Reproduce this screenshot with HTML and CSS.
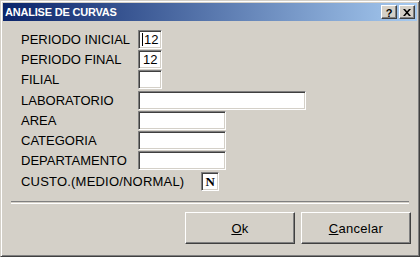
FILE: index.html
```html
<!DOCTYPE html>
<html lang="pt">
<head>
  <meta charset="UTF-8">
  <title>ANALISE DE CURVAS</title>
  <link rel="stylesheet" href="styles.css">
</head>
<body>

  <div class="window">
    <div class="titlebar">
      <span class="title">ANALISE DE CURVAS</span>
      <div class="title-buttons">
        <span class="tbtn help">?</span>
        <span class="tbtn close">
          <svg width="8" height="7" viewBox="0 0 8 7">
            <path d="M0 0h2l2 2.2L6 0h2L5 3.5L8 7H6L4 4.8L2 7H0l3-3.5z" fill="#000"/>
          </svg>
        </span>
      </div>
    </div>

    <form class="form">
      <div class="row">
        <label>PERIODO INICIAL</label>
        <div class="field small"><span class="caret"></span>12</div>
      </div>
      <div class="row">
        <label>PERIODO FINAL</label>
        <div class="field small">12</div>
      </div>
      <div class="row">
        <label>FILIAL</label>
        <div class="field small"></div>
      </div>
      <div class="row spaced">
        <label>LABORATORIO</label>
        <div class="field wide"></div>
      </div>
      <div class="row">
        <label>AREA</label>
        <div class="field medium"></div>
      </div>
      <div class="row">
        <label>CATEGORIA</label>
        <div class="field medium"></div>
      </div>
      <div class="row">
        <label>DEPARTAMENTO</label>
        <div class="field medium"></div>
      </div>
      <div class="row spaced">
        <label class="auto">CUSTO.(MEDIO/NORMAL)</label>
        <div class="field tiny">N</div>
      </div>

      <div class="separator"></div>

      <div class="actions">
        <button type="button"><u>O</u>k</button>
        <button type="button"><u>C</u>ancelar</button>
      </div>
    </form>
  </div>

</body>
</html>
```

FILE: styles.css
```css
body {
  margin: 0;
  background-color: #d4d0c8;
  font-family: "Liberation Sans", Arial, sans-serif;
}

.window {
  width: 420px;
  height: 257px;
  box-sizing: border-box;
  background-color: #d4d0c8;
  border: 1px solid;
  border-color: #d4d0c8 #404040 #404040 #d4d0c8;
  box-shadow: inset 1px 1px #fff, inset -1px -1px #808080;
  padding: 2px;
}

.titlebar {
  height: 18px;
  display: flex;
  align-items: center;
  justify-content: space-between;
  background: linear-gradient(to right, #0a246a, #a6caf0);
  padding: 0 2px 0 2px;
}

.title {
  color: #fff;
  font-weight: bold;
  font-size: 11px;
  letter-spacing: -0.2px;
}

.title-buttons {
  display: flex;
  gap: 2px;
}

.tbtn {
  width: 16px;
  height: 14px;
  box-sizing: border-box;
  display: flex;
  align-items: center;
  justify-content: center;
  background-color: #d4d0c8;
  border: 1px solid;
  border-color: #fff #404040 #404040 #fff;
  box-shadow: inset -1px -1px #808080;
  font-size: 11px;
  font-weight: bold;
  color: #000;
}

.tbtn.help {
  padding-top: 1px;
}

.form {
  padding: 9px 0 0 0;
  margin: 0;
}

.row {
  display: flex;
  align-items: center;
  height: 19px;
  margin-bottom: 1px;
}

.row.spaced {
  margin-top: 2px;
}

.row label {
  width: 117px;
  padding-left: 18px;
  font-size: 13px;
  color: #000;
  flex-shrink: 0;
}

.row label.auto {
  width: auto;
  margin-right: 17px;
  letter-spacing: 0.2px;
}

.field {
  height: 19px;
  box-sizing: border-box;
  background-color: #fff;
  border: 1px solid;
  border-color: #808080 #fff #fff #808080;
  box-shadow: inset 1px 1px #404040, inset -1px -1px #d4d0c8;
  font-size: 13px;
  padding-left: 4px;
  display: flex;
  align-items: center;
}

.field.small { width: 24px; }
.field.medium { width: 88px; }
.field.wide { width: 168px; }

.field.tiny {
  width: 18px;
  padding-left: 3px;
  font-family: "Liberation Serif", "Times New Roman", serif;
  font-weight: bold;
  font-size: 13px;
}

.caret {
  width: 1px;
  height: 13px;
  background-color: #000;
  margin-left: -1px;
  margin-right: 1px;
}

.separator {
  margin: 10px 8px 0 8px;
  height: 1px;
  border-top: 1px solid #808080;
  border-bottom: 1px solid #fff;
}

.actions {
  display: flex;
  justify-content: flex-end;
  gap: 6px;
  margin: 8px 6px 0 0;
}

.actions button {
  width: 110px;
  height: 32px;
  background-color: #d4d0c8;
  border: 1px solid;
  border-color: #fff #404040 #404040 #fff;
  box-shadow: inset -1px -1px #808080;
  font-family: "Liberation Sans", Arial, sans-serif;
  font-size: 13px;
  color: #000;
  padding: 0;
  letter-spacing: 0.3px;
}
```
